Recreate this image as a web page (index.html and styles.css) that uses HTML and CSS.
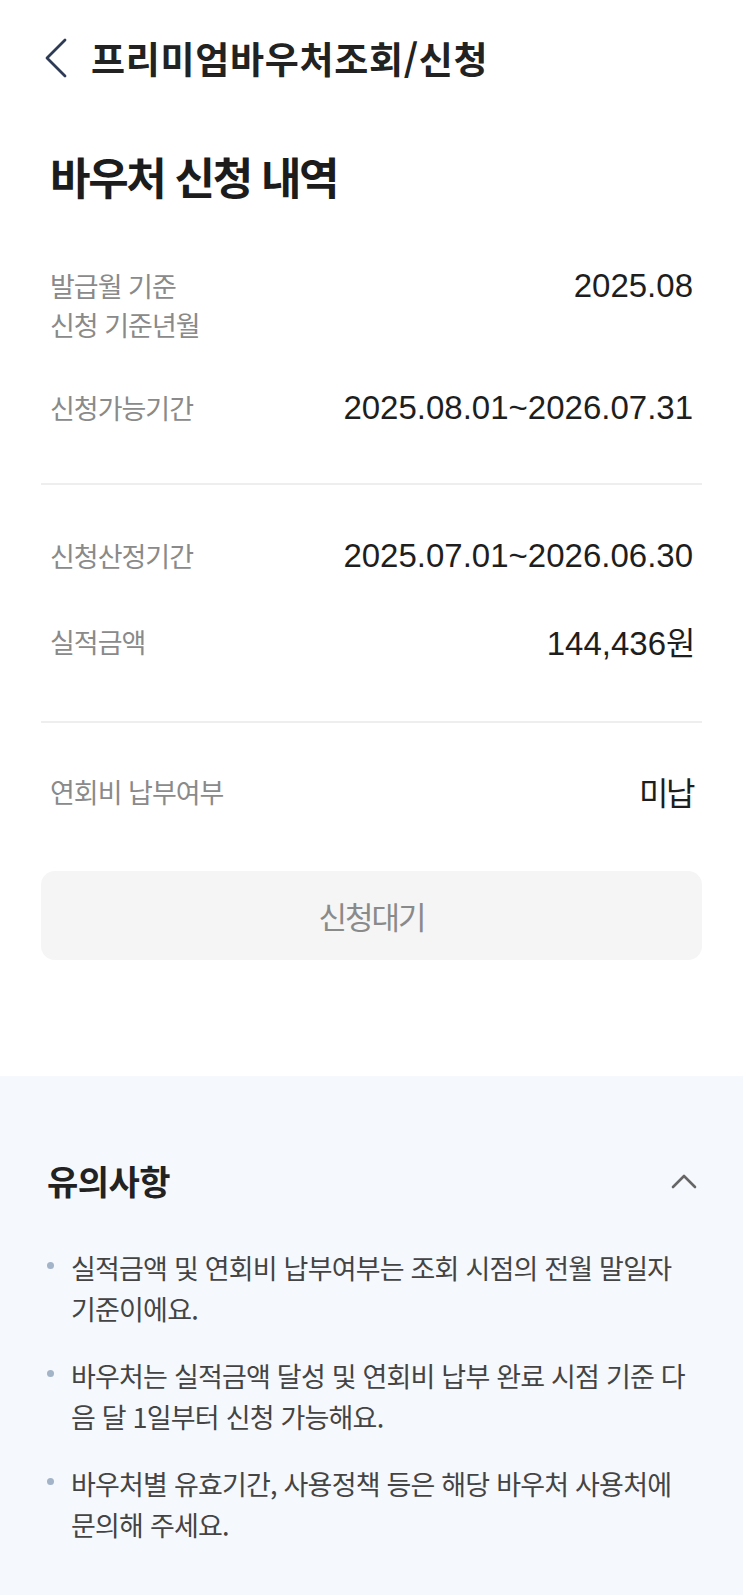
FILE: index.html
```html
<!DOCTYPE html>
<html lang="ko">
<head>
<meta charset="utf-8">
<title>프리미엄바우처조회/신청</title>
<link rel="stylesheet" href="styles.css">
</head>
<body>
<header class="app-bar">
  <span class="back-btn" aria-label="뒤로">
    <svg width="24" height="40" viewBox="0 0 24 40" fill="none">
      <polyline points="21,2 3,20 21,38" stroke="#2f3b56" stroke-width="2.8" stroke-linecap="round" stroke-linejoin="round"/>
    </svg>
  </span>
  <h1 class="app-title">프리미엄바우처조회/신청</h1>
</header>

<main class="content">
  <h2 class="page-title">바우처 신청 내역</h2>

  <section class="info-group info-group-first">
    <div class="info-row">
      <div class="info-label">발급월 기준<br>신청 기준년월</div>
      <div class="info-value">2025.08</div>
    </div>
    <div class="info-row">
      <div class="info-label">신청가능기간</div>
      <div class="info-value">2025.08.01~2026.07.31</div>
    </div>
  </section>

  <section class="info-group info-group-mid">
    <div class="info-row">
      <div class="info-label">신청산정기간</div>
      <div class="info-value">2025.07.01~2026.06.30</div>
    </div>
    <div class="info-row">
      <div class="info-label">실적금액</div>
      <div class="info-value">144,436<span class="kr">원</span></div>
    </div>
  </section>

  <section class="info-group info-group-last">
    <div class="info-row">
      <div class="info-label">연회비 납부여부</div>
      <div class="info-value"><span class="kr">미납</span></div>
    </div>
  </section>

  <div class="wait-btn">신청대기</div>
</main>

<section class="notice">
  <div class="notice-head">
    <h3 class="notice-title">유의사항</h3>
    <svg class="notice-toggle" width="26" height="16" viewBox="0 0 26 16" fill="none">
      <polyline points="2,14 13,3 24,14" stroke="#666666" stroke-width="2.6" stroke-linecap="round" stroke-linejoin="round"/>
    </svg>
  </div>
  <ul class="notice-list">
    <li class="notice-item"><span class="dot"></span><p class="notice-text">실적금액 및 연회비 납부여부는 조회 시점의 전월 말일자<br>기준이에요.</p></li>
    <li class="notice-item"><span class="dot"></span><p class="notice-text">바우처는 실적금액 달성 및 연회비 납부 완료 시점 기준 다<br>음 달 1일부터 신청 가능해요.</p></li>
    <li class="notice-item"><span class="dot"></span><p class="notice-text">바우처별 유효기간, 사용정책 등은 해당 바우처 사용처에<br>문의해 주세요.</p></li>
  </ul>
</section>
</body>
</html>
```

FILE: styles.css
```css
* {
  box-sizing: border-box;
}

html {
  background: #f5f8fc;
}

body {
  margin: 0;
  background: #ffffff;
  font-family: "Noto Sans CJK KR", "Noto Sans", sans-serif;
  color: #222222;
}

.app-bar {
  height: 116px;
  display: flex;
  align-items: center;
  padding-left: 44px;
}

.back-btn {
  display: flex;
  width: 24px;
  height: 40px;
  margin-right: 23px;
}

.app-title {
  margin: 0;
  font-size: 37px;
  font-weight: 700;
  line-height: 48px;
  letter-spacing: 0.7px;
  color: #222222;
}

.content {
  padding: 0 41px 116px;
}

.page-title {
  margin: 30px 0 0;
  padding-left: 9px;
  font-size: 44px;
  font-weight: 700;
  line-height: 60px;
  letter-spacing: -2.3px;
  color: #1c1c1c;
}

.info-group {
  display: flex;
  flex-direction: column;
}

.info-group-first {
  padding: 60px 0 56px;
  gap: 44px;
}

.info-group-mid {
  border-top: 2px solid #eeeeee;
  padding: 51px 0 58px;
  gap: 47px;
}

.info-group-last {
  border-top: 2px solid #eeeeee;
  padding: 49px 0 58px;
}

.info-row {
  display: flex;
  justify-content: space-between;
  align-items: flex-start;
  padding: 0 9px;
}

.info-label {
  font-size: 27px;
  line-height: 39px;
  letter-spacing: -1px;
  color: #8a8a8a;
}

.info-value {
  font-family: "Liberation Sans", "Noto Sans CJK KR", sans-serif;
  font-size: 33px;
  line-height: 39px;
  color: #1e1e1e;
  white-space: nowrap;
}

.info-value .kr {
  font-family: "Noto Sans CJK KR", sans-serif;
  font-size: 32px;
  letter-spacing: -2.5px;
}

.wait-btn {
  height: 89px;
  border-radius: 14px;
  background: #f5f5f5;
  display: flex;
  align-items: center;
  justify-content: center;
  font-size: 31px;
  letter-spacing: -2px;
  color: #8a8a8a;
}

.notice {
  background: #f5f8fc;
  padding: 83px 46px 60px 47px;
}

.notice-head {
  display: flex;
  justify-content: space-between;
  align-items: center;
  height: 44px;
}

.notice-title {
  margin: 0;
  font-size: 34px;
  font-weight: 700;
  line-height: 44px;
  letter-spacing: -0.5px;
  color: #222222;
}

.notice-toggle {
  display: block;
}

.notice-list {
  list-style: none;
  margin: 44px 0 0;
  padding: 0;
  display: flex;
  flex-direction: column;
  gap: 26px;
}

.notice-item {
  display: flex;
  align-items: flex-start;
}

.dot {
  flex: none;
  width: 7px;
  height: 7px;
  border-radius: 50%;
  background: #a3b3c8;
  margin-top: 15px;
  margin-right: 17px;
}

.notice-text {
  margin: 0;
  font-size: 27px;
  line-height: 41px;
  letter-spacing: -0.8px;
  color: #444444;
  white-space: nowrap;
}
```
